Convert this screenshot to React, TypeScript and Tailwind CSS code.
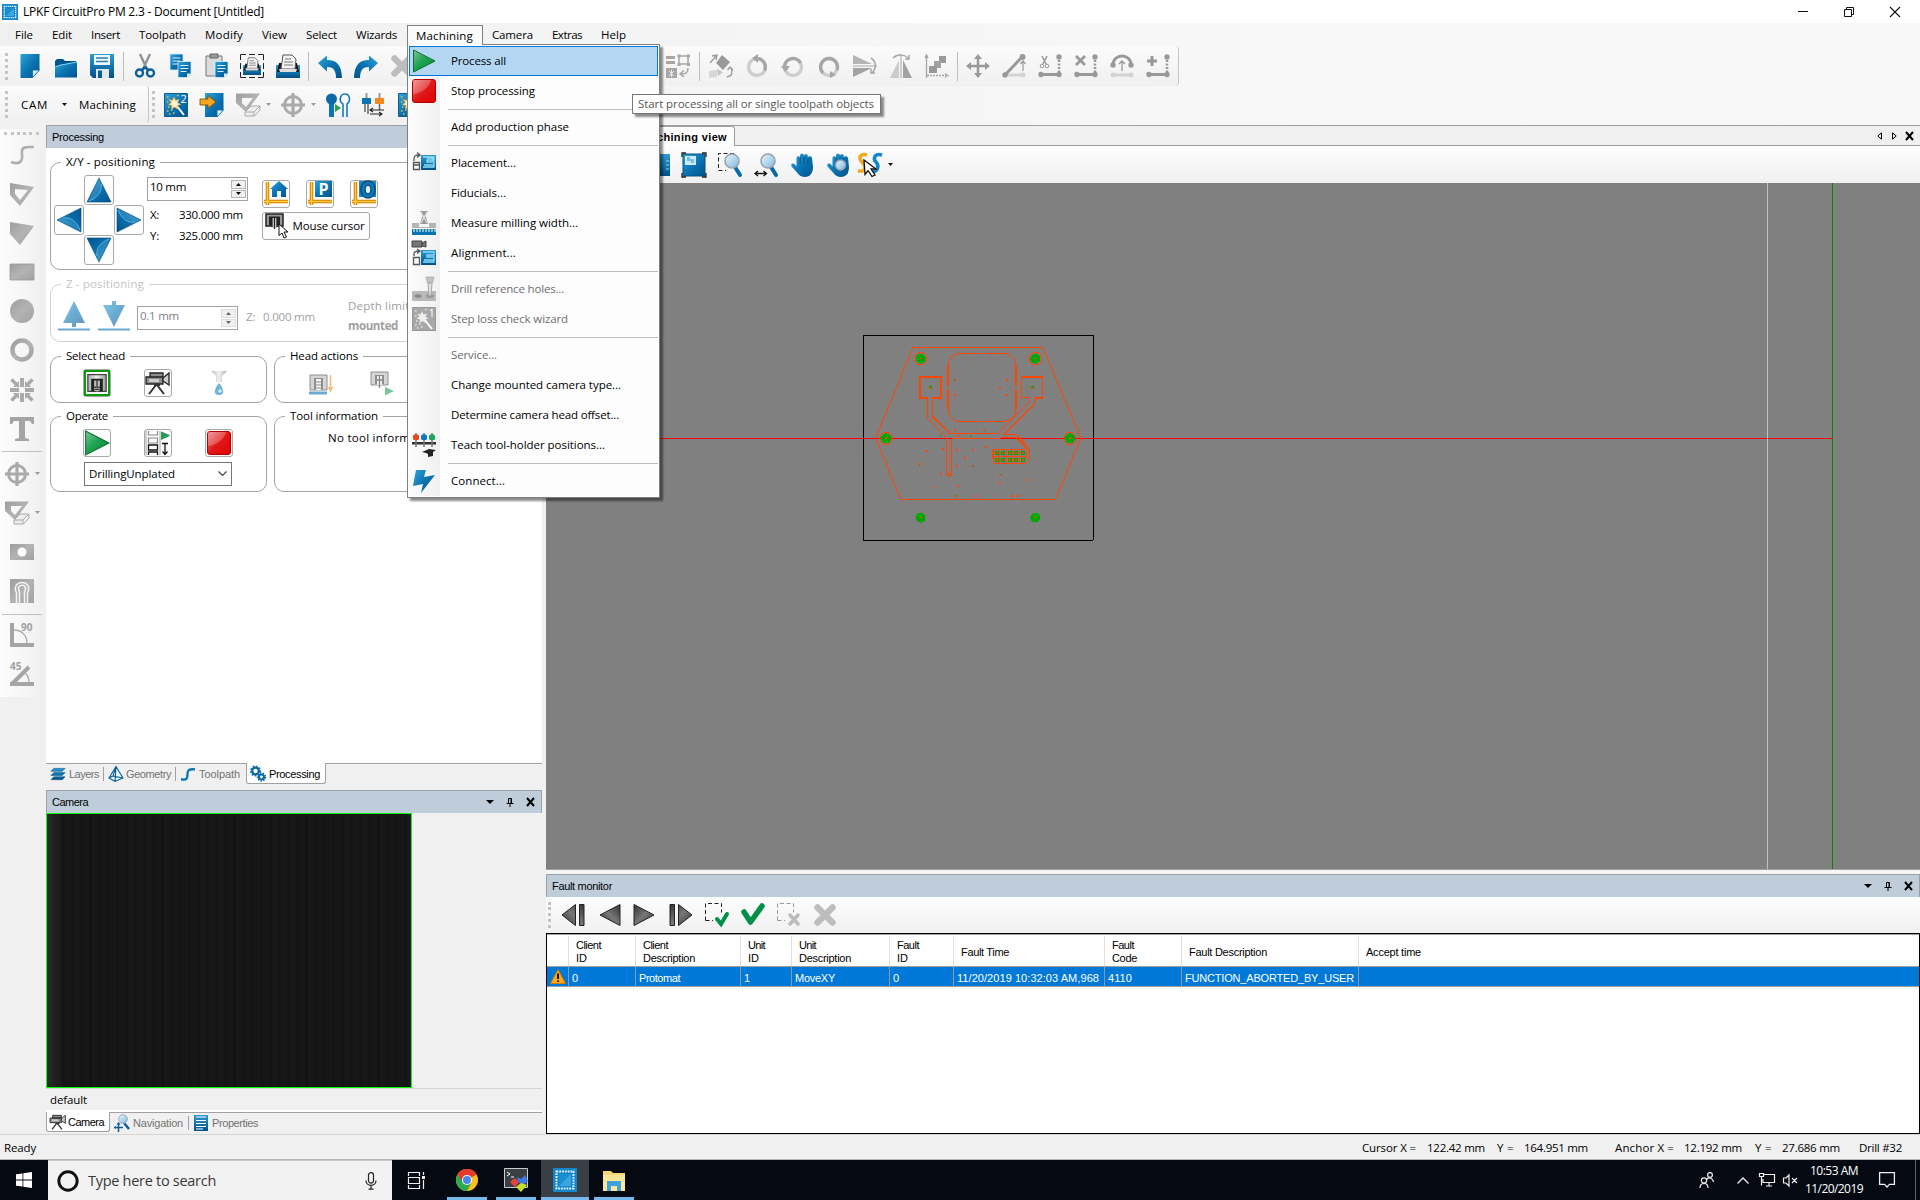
import React, { useLayoutEffect, useRef, useState } from "react";

type Kids = { children?: React.ReactNode };

/* Text whose tracking is adjusted so that it fills the given width */
function Fit({ w, className = "", children }: { w: number; className?: string; children: string }) {
  const ref = useRef<HTMLSpanElement>(null);
  const [ls, setLs] = useState(0);
  useLayoutEffect(() => {
    if (ref.current) setLs((w - ref.current.getBoundingClientRect().width) / children.length);
  }, []);
  return (
    <span className={"shrink-0 overflow-visible whitespace-pre " + className} style={{ width: w }}>
      <span ref={ref} className="inline-block" style={{ letterSpacing: ls }}>{children}</span>
    </span>
  );
}

function I({ w = 24, h = 24, vb = "0 0 24 24", className = "", children }: Kids & { w?: number; h?: number; vb?: string; className?: string }) {
  return (
    <svg width={w} height={h} viewBox={vb} className={"shrink-0 overflow-visible " + className} fill="none">
      {children}
    </svg>
  );
}

const Defs = () => (
  <svg width="0" height="0" className="absolute">
    <defs>
      <linearGradient id="b" x1="0" y1="0" x2="1" y2="1"><stop offset="0" stopColor="#2fa5d8" /><stop offset=".5" stopColor="#0b74b3" /><stop offset="1" stopColor="#00528c" /></linearGradient>
      <linearGradient id="b2" x1="0" y1="0" x2="0" y2="1"><stop offset="0" stopColor="#2d9bd3" /><stop offset="1" stopColor="#00508a" /></linearGradient>
      <linearGradient id="g" x1="0" y1="0" x2="1" y2="1"><stop offset="0" stopColor="#9d9d9d" /><stop offset=".5" stopColor="#b3b3b3" /><stop offset="1" stopColor="#a2a2a2" /></linearGradient>
      <linearGradient id="gn" x1="0" y1="0" x2="1" y2="1"><stop offset="0" stopColor="#7cc795" /><stop offset=".45" stopColor="#1fa351" /><stop offset="1" stopColor="#008a3a" /></linearGradient>
      <linearGradient id="r" x1="0" y1="0" x2="1" y2="1"><stop offset="0" stopColor="#f08080" /><stop offset=".5" stopColor="#e01818" /><stop offset="1" stopColor="#e00000" /></linearGradient>
      <linearGradient id="k" x1="0" y1="0" x2="1" y2="1"><stop offset="0" stopColor="#333" /><stop offset=".5" stopColor="#777" /><stop offset="1" stopColor="#333" /></linearGradient>
      <linearGradient id="lens" x1="0" y1="0" x2="1" y2="1"><stop offset="0" stopColor="#e8f6fd" /><stop offset="1" stopColor="#7fb8e0" /></linearGradient>
      <linearGradient id="m" x1="0" y1="0" x2="1" y2="0"><stop offset="0" stopColor="#aaa" /><stop offset=".5" stopColor="#eee" /><stop offset="1" stopColor="#999" /></linearGradient>
    </defs>
  </svg>
);

/* ---------- file and edit icons ---------- */
const NewIcon = () => <I><path d="M2.500 0h19v16l-7 8h-12z" fill="url(#b)" /><path d="M14.500 23.500v-7.500h7z" fill="#cfeaf8" stroke="#0a6aa6" strokeWidth=".8" /></I>;
const OpenIcon = () => <I><path d="M1 23.500V7l2-2h6l2 2h11v4" fill="#00568f" /><path d="M1 23.500V13l4-2 18-3v15.500z" fill="url(#b)" /><path d="M1 13l6-2 16-3" stroke="#8fd0ee" /></I>;
const SaveIcon = () => <I><path d="M0 0h24v24H3l-3-3z" fill="url(#b2)" /><path d="M4 1h16v10H4z" fill="#eef7fc" /><path d="M6 4h12M6 7.500h12" stroke="#2b7fb2" strokeWidth="1.500" /><path d="M6 15h13v9H6z" fill="#dfe7ec" /><path d="M8 16.500h4v7.500H8z" fill="#0a5f99" /></I>;
const CutIcon = () => <I><path d="M7 0l6.500 14M17 0l-6.500 14" stroke="#8d9499" strokeWidth="2.400" /><path d="M12 13l-3 3M12 13l3 3" stroke="#0a5f99" strokeWidth="2.500" /><circle cx="6.500" cy="19" r="3.500" stroke="#0a5f99" strokeWidth="2.400" /><circle cx="17.500" cy="19" r="3.500" stroke="#0a5f99" strokeWidth="2.400" /></I>;
const Page = ({ x, y }: { x: number; y: number }) => <g transform={`translate(${x} ${y})`}><path d="M0 0h13v12l-4 4H0z" fill="url(#b)" stroke="#d6edf8" strokeWidth=".8" /><path d="M2.500 4h8M2.500 7h8M2.500 10h6" stroke="#d8f0fb" strokeWidth="1.200" /><path d="M9 16v-4h4z" fill="#d6edf8" /></g>;
const CopyIcon = () => <I><Page x={1} y={0} /><Page x={9} y={7.500} /></I>;
const PasteIcon = () => <I><path d="M1 2h16v20H1z" fill="#dcdcdc" stroke="#777" /><path d="M5 0h8v4H5z" fill="#999" stroke="#666" /><Page x={10} y={7.500} /></I>;
const Printer = ({ s = 1, x = 0, y = 0 }: { s?: number; x?: number; y?: number }) => (
  <g transform={`translate(${x} ${y}) scale(${s})`}>
    <path d="M0 11h24v13H0z" fill="url(#b2)" /><path d="M3 9h18l2 9H1z" fill="#1a1a1a" /><path d="M5 15L7 1h9l4 4-1 10z" fill="#f4f4f4" stroke="#555" /><path d="M9 5h6M8 8h9M8 11h9" stroke="#777" strokeWidth="1.100" /><path d="M3 15h18l-1 3H4z" fill="#ddd" />
  </g>
);
const PrintAreaIcon = () => <I><path d="M.5 6V.5H6M18 .5h5.500V6M23.500 18v5.500H18M6 23.500H.5V18M9 .5h6M9 23.500h6M.5 9v6M23.500 9v6" stroke="#222" /><Printer s={0.75} x={3} y={3} /></I>;
const PrintIcon = () => <I><Printer /></I>;
const UndoIcon = ({ flip = false }: { flip?: boolean }) => <I className={flip ? "-scale-x-100" : ""}><path d="M0 9l9-7.500v4.500c9 0 14.500 4 15 18h-6c0-8-3-11-9-11v4.500z" fill="url(#b)" /></I>;
const XIcon = () => <I><path d="M4.500 4.500l15 15M19.500 4.500l-15 15" stroke="#bdbdbd" strokeWidth="6.500" strokeLinecap="round" /></I>;

/* ---------- greyed transform icons ---------- */
const G = "#a6a6a6";
const ArrangeIcon = () => <I><path d="M0 3.500h9M0 8.500h9" stroke={G} strokeWidth="3" /><path d="M13 2h9v8h-9z" stroke={G} strokeWidth="1.500" /><path d="M11.500 .5h3v3h-3zM21 .5h3v3h-3zM11.500 9h3v3h-3zM21 9h3v3h-3z" fill={G} /><path d="M0 14h11v10H0z" fill={G} /><path d="M3 17l5 5M8 17l-5 5M5.500 16v7" stroke="#eee" /><path d="M22 14c0 5-2 6-7 6M18 16.500l-4 3.500 4 3" stroke={G} strokeWidth="1.500" /></I>;
const TransformIcon = () => <I><path d="M13 1l8 7-7 8-7-7z" fill="#999" /><path d="M0 17l8-1v7l-8 1z" fill="#d8d8d8" /><path d="M8 15l6 3-5 4z" fill="#c4c4c4" /><path d="M1 9l6-7M3 2l5-1-1 5M18 23c5-1 6-4 4-9M18.500 16l2.500-3 3 3" stroke="#999" strokeWidth="1.300" /></I>;
const RotIcon = ({ k }: { k: number }) => (
  <I>
    <circle cx="12" cy="13" r="8.500" stroke="#cdcdcd" strokeWidth="3.300" />
    {k === 0 && <><path d="M12 4.500a8.500 8.500 0 0 1 7.500 12" stroke={G} strokeWidth="3.300" /><path d="M13 0v9L7 4z" fill={G} /></>}
    {k === 1 && <><path d="M3.500 13a8.500 8.500 0 0 1 16-4" stroke={G} strokeWidth="3.300" /><path d="M0 12h9l-4.500 6z" fill={G} /></>}
    {k === 2 && <><path d="M6 19A8.500 8.500 0 1 1 20 16" stroke={G} strokeWidth="3.300" /><path d="M13 17v7l6-3z" fill={G} /></>}
  </I>
);
const FlipV = () => <I><path d="M0 1l19 9H0z" fill="#b4b4b4" /><path d="M0 23l19-9H0z" fill="#a2a2a2" /><path d="M0 12h24" stroke={G} /><path d="M18 4c5 3 6 10 1 15M22 19h-4v-4" stroke={G} strokeWidth="1.500" /></I>;
const FlipH = () => <I><path d="M1 24L10 6v18z" fill="#ccc" /><path d="M23 24L14 6v18z" fill="#a2a2a2" /><path d="M12 0v24" stroke={G} /><path d="M4 4c4-4 12-4 16 1M20 1v4h-4" stroke={G} strokeWidth="1.500" /></I>;
const ScaleIcon = () => <I><path d="M14 2h7v7h-7z" fill="#999" /><path d="M9 7h7v7H9z" fill="#a2a2a2" /><path d="M4 12h8v7H4z" fill="#999" /><path d="M1.500 24V2M0 4l1.500-3L3 4" stroke={G} strokeWidth="1.300" /><path d="M2 21.500h20M20 19.500l3 2-3 2" stroke={G} strokeWidth="1.300" strokeDasharray="2 1" /></I>;
const MoveIcon = () => <I><path d="M12 3v18M3 12h18" stroke="#999" strokeWidth="2.500" /><path d="M12 0l4 5H8zM12 24l4-5H8zM0 12l5-4v8zM24 12l-5-4v8z" fill="#999" /></I>;
const NodeLine = ({ k }: { k: number }) => (
  <I>
    {k === 0 && <><path d="M3 21h18" stroke="#d3d3d3" strokeWidth="3" /><path d="M3 21L20 3" stroke="#999" strokeWidth="3" /><circle cx="3" cy="21" r="2.700" fill="#999" /><circle cx="20.500" cy="3" r="3" fill="#999" /><circle cx="21" cy="21" r="2.500" fill="#d3d3d3" /><path d="M21 17V8M18.500 10L21 7l2.500 3" stroke="#999" strokeWidth="1.200" /></>}
    {k !== 0 && k !== 3 && <><path d="M3 20.500h18" stroke="#999" strokeWidth="3" /><circle cx="3" cy="20.500" r="2.700" fill="#999" /><circle cx="21" cy="20.500" r="2.700" fill="#999" /><circle cx="21" cy="3" r="2.700" fill="#999" /><path d="M21 6v12" stroke="#999" strokeWidth="2.500" strokeDasharray="2 1.500" /></>}
    {k === 1 && <><path d="M4 2l4 8M9 2L5 10" stroke="#999" strokeWidth="1.500" /><circle cx="4" cy="12" r="1.800" stroke="#999" /><circle cx="9" cy="12" r="1.800" stroke="#999" /></>}
    {k === 2 && <path d="M2 2l9 9M11 2l-9 9" stroke="#999" strokeWidth="2.800" />}
    {k === 4 && <path d="M6 2v10M1 7h10" stroke="#999" strokeWidth="3" />}
    {k === 3 && <><path d="M3 21h18" stroke="#d3d3d3" strokeWidth="3" /><circle cx="3" cy="21" r="2.500" fill="#d3d3d3" /><circle cx="21" cy="21" r="2.500" fill="#d3d3d3" /><path d="M3 11C3-1 21-1 21 11" stroke="#999" strokeWidth="3" /><circle cx="3" cy="11" r="2.700" fill="#999" /><circle cx="21" cy="11" r="2.700" fill="#999" /><path d="M12 17V7M9 10l3-3 3 3" stroke="#999" strokeWidth="1.300" /></>}
  </I>
);

/* ---------- CAM icons ---------- */
const WandIcon = ({ n, grey = false }: { n?: string; grey?: boolean }) => (
  <I>
    <path d="M.5 .5h23v23H.5z" fill={grey ? "#a8a8a8" : "url(#b)"} stroke={grey ? "#999" : "#0b5e95"} />
    <path d="M12 12l8 10" stroke="#fff" strokeWidth="2" />
    <path d="M10 4l1.500 3.500L15 6.500 13.500 9.500l3 2-3.500 1 .5 3.500-3-2-3 2 .5-3.500-3.500-1 3-2L5 6.500l3.500 1z" fill={grey ? "#eee" : "#fff3d0"} stroke={grey ? "none" : "#e7ac3d"} strokeWidth=".8" />
    <path d="M3 4h1.500M3 9h1.500M4 14h1.500M3 18h1.500M7 17h1.500M9 20h1.500M5 21h1.500M13 2.500h1.500" stroke={grey ? "#e4e4e4" : "#f6c24a"} strokeWidth="1.600" />
    {n && <text x="16.500" y="10" fontSize="11" fill="#fff" fontFamily="Open Sans, sans-serif">{n}</text>}
  </I>
);
const ImportIcon = () => <I><path d="M5 0h18.500v17l-6.500 7H5z" fill="url(#b)" /><path d="M17 24v-7h6.500z" fill="#d6edf8" stroke="#0a6aa6" strokeWidth=".8" /><path d="M0 6h8V2.500l8 6.500-8 6.500V12H0z" fill="#f6a51c" stroke="#6b4a10" strokeWidth=".8" /></I>;
const SquareIcon = () => <I><path fillRule="evenodd" d="M0 .5h24L10 19 0 10zM6 5v5l4 4 7-9z" fill="url(#g)" /><path d="M9 19l6-6h9l-6 6v4H9z" fill="#ededed" stroke="#aaa" /><path d="M9 19h9l6-6v4l-6 6.500" stroke="#aaa" /></I>;
const TargetIcon = () => <I><circle cx="12" cy="12" r="8.500" stroke="#aaa" strokeWidth="3" /><path d="M12 0v24M0 12h24" stroke="#aaa" strokeWidth="3.200" /></I>;
const ContourIcon = () => <I><path d="M3 24V11h5v13z" fill="#0b74b3" /><circle cx="5.500" cy="6" r="5.500" fill="#0b6aa5" /><path d="M17 24V11c-6-4-1-11 2-10 5 0 6 7 2 10v13" stroke="#0b74b3" strokeWidth="1.500" /><path d="M9 11v8l6-4z" fill="#22a04a" /></I>;
const ToolChangeIcon = () => <I><path d="M4.500 0v6M17.500 0v6" stroke="#999" strokeWidth="2" /><path d="M0 5h9v6H0z" fill="#0b74b3" /><path d="M13 5h9v6h-9z" fill="#f08a1c" /><path d="M3 11v8M6 11v10M17.500 11v6" stroke="#666" strokeWidth="1.500" /><path d="M8 17h14M11 15l-3 2 3 2M8 21h12M17 19l3 2-3 2" stroke="#222" strokeWidth="1.100" /></I>;

/* ---------- drawing tools ---------- */
const sideIcons: React.ReactNode[] = [
  <path d="M1 19c8 3 12 0 11-8S16 4 24 4" stroke="url(#g)" strokeWidth="2.600" />,
  <path fillRule="evenodd" d="M0 1l24 4-14 19L0 13zM5 7v5l5 6 8-10z" fill="url(#g)" />,
  <path d="M0 1l24 4-14 19L0 13z" fill="url(#g)" />,
  <path d="M0 4h24v16H0z" fill="url(#g)" stroke="#999" strokeWidth=".8" />,
  <circle cx="12" cy="12" r="12" fill="url(#g)" />,
  <circle cx="12" cy="12" r="9.500" stroke="url(#g)" strokeWidth="4.500" />,
  <><path d="M10 0h4v9h-4zM10 15h4v9h-4zM0 10h9v4H0zM15 10h9v4h-9z" fill="#aaa" /><path d="M1.500 1.500l6 6M22.500 1.500l-6 6M1.500 22.500l6-6M22.500 22.500l-6-6" stroke="#aaa" strokeWidth="3.500" /><path d="M9 3v6H3zM15 3v6h6zM9 21v-6H3zM15 21v-6h6z" fill="#aaa" /></>,
  <path d="M0 0h24v7h-2l-2-3h-5v17l4 1v2H5v-2l4-1V4H4L2 7H0z" fill="#a5a5a5" />,
];
const sideLow: React.ReactNode[] = [
  <><path d="M0 4h24v16H0z" fill="url(#g)" /><circle cx="12" cy="12" r="4.500" fill="#fff" /></>,
  <><path d="M0 0h24v24H0z" fill="url(#g)" /><path d="M9.500 24V13c-5-9 10-9 5 0v11M6.500 24V14C0 0 24 0 17.500 14v10" stroke="#f4f4f4" strokeWidth="1.500" /></>,
];

function Side() {
  return (
    <div className="flex w-[46px] shrink-0 flex-col bg-[#f0f0f0]">
      <div className="mt-1 flex h-[568px] flex-col rounded-r bg-gradient-to-r from-[#fdfdfd] to-[#efefef]">
        <div className="ml-1 mt-[3px] h-0 w-[35px] border-t-[3px] border-dotted border-[#c4c4c4]" />
        <div className="ml-[10px] mt-2 flex flex-col gap-[15.100px]">
          {sideIcons.map((c, i) => <I key={i}>{c}</I>)}
        </div>
        <div className="ml-[2px] mt-[10px] h-px w-10 bg-[#c0c0c0]" />
        <div className="mt-[10px] flex items-center gap-[6px] pl-[5px]"><TargetIcon /><Caret grey /></div>
        <div className="mt-[15px] flex items-center gap-[6px] pl-[5px]"><SquareIcon /><Caret grey /></div>
        <div className="ml-[10px] mt-[15px] flex flex-col gap-[15px]">{sideLow.map((c, i) => <I key={i}>{c}</I>)}</div>
        <div className="ml-[2px] mt-[11px] h-px w-10 bg-[#c0c0c0]" />
        <div className="ml-[10px] mt-2 flex flex-col gap-[15px]">
          <I><path d="M2 0v22h22" stroke="#a5a5a5" strokeWidth="4" /><path d="M4 7c8 0 13 6 13 13" stroke="#aaa" strokeWidth="1.300" /><text x="11" y="7.500" fontSize="10" fontWeight="700" fill="#a0a0a0" fontFamily="Open Sans, sans-serif">90</text></I>
          <I><path d="M0 22h24M2 22L19 5" stroke="#a5a5a5" strokeWidth="4" /><path d="M13 9c4 3 6 7 6 11" stroke="#aaa" strokeWidth="1.300" /><text x="0" y="7.500" fontSize="10" fontWeight="700" fill="#a0a0a0" fontFamily="Open Sans, sans-serif">45</text></I>
        </div>
      </div>
    </div>
  );
}

const Caret = ({ grey = false }: { grey?: boolean }) => <I w={5} h={3} vb="0 0 5 3"><path d="M0 0h5L2.500 3z" fill={grey ? "#999" : "#111"} /></I>;
const Grip = ({ tall = 27 }: { tall?: number }) => <div className="w-0 shrink-0 border-l-[3px] border-dotted border-[#c4c4c4]" style={{ height: tall }} />;
const Cell = ({ children }: Kids) => <div className="flex w-9 shrink-0 justify-center">{children}</div>;
const Sep = ({ className = "" }: { className?: string }) => <div className={"h-[29px] w-px shrink-0 bg-[#bdbdbd] " + className} />;

/* ---------- menu bar ---------- */
const menus: [string, number, number][] = [
  ["File", 15, 18], ["Edit", 19, 20], ["Insert", 19, 29], ["Toolpath", 19, 47], ["Modify", 19, 38], ["View", 19, 25], ["Select", 19, 31],
  ["Wizards", 19, 41], ["Machining", 19, 57], ["Camera", 19, 41], ["Extras", 19, 30], ["Help", 19, 25],
];

const winBtn = "flex w-[46px] justify-center";

function TitleBar() {
  return (
    <div className="flex h-[23px] items-center bg-white">
      <AppIcon s={16} className="ml-[2px] mr-[5px]" />
      <Fit w={241} className="text-[12px]">LPKF CircuitPro PM 2.3 - Document [Untitled]</Fit>
      <div className="ml-auto mr-[2px] flex items-center">
        <div className={winBtn}><I w={10} h={10} vb="0 0 10 10"><path d="M0 4.500h10" stroke="#111" /></I></div>
        <div className={winBtn}><I w={10} h={10} vb="0 0 10 10"><path d="M.5 2.500h7v7h-7zM2.500 2.500v-2h7v7h-2" stroke="#111" /></I></div>
        <div className={winBtn}><I w={10} h={10} vb="0 0 10 10"><path d="M0 0l10 10M10 0L0 10" stroke="#111" strokeWidth="1.100" /></I></div>
      </div>
    </div>
  );
}

const AppIcon = ({ s, className = "" }: { s: number; className?: string }) => (
  <I w={s} h={s} className={className}>
    <path d="M0 0h24v24H0z" fill="#1286c8" /><path d="M3.500 3.500h17v17h-17z" stroke="#e6f5fd" strokeWidth="2" strokeDasharray="1.800 1" /><path d="M6 6h12v12H6z" fill="#1a8fd0" /><path d="M6 18L18 6v12z" fill="#3aa7e0" />
  </I>
);

function Toolbars() {
  return (
    <div className="h-[79px] bg-gradient-to-r from-[#f0f0f0] to-[#f8f8f8] to-70%">
      <div className="flex h-10 w-[1179px] items-center rounded-r border-r border-[#c6c6c6] bg-gradient-to-b from-[#fbfbfb] to-[#f0f0f0]">
        <div className="ml-[5px] mr-1 flex"><Grip /></div>
        <Cell><NewIcon /></Cell><Cell><OpenIcon /></Cell><Cell><SaveIcon /></Cell>
        <Sep className="ml-[3px] mr-[3px]" />
        <Cell><CutIcon /></Cell><Cell><CopyIcon /></Cell><Cell><PasteIcon /></Cell>
        <div className="-ml-px flex"><Cell><PrintAreaIcon /></Cell><Cell><PrintIcon /></Cell></div>
        <Sep className="ml-[2px] mr-[3px]" />
        <Cell><UndoIcon /></Cell><Cell><UndoIcon flip /></Cell><Cell><XIcon /></Cell>
        <div className="w-[240px] shrink-0" />
        <Cell><ArrangeIcon /></Cell>
        <Sep className="ml-[3px] mr-[3px]" />
        <Cell><TransformIcon /></Cell><Cell><RotIcon k={0} /></Cell><Cell><RotIcon k={1} /></Cell><Cell><RotIcon k={2} /></Cell><Cell><FlipV /></Cell><Cell><FlipH /></Cell><Cell><ScaleIcon /></Cell>
        <Sep className="ml-[2px] mr-[2px]" />
        <Cell><MoveIcon /></Cell>
        {[0, 1, 2, 3, 4].map((k) => <Cell key={k}><NodeLine k={k} /></Cell>)}
      </div>
      <div className="flex h-[37px]">
        <div className="flex w-[149px] items-center rounded-r border-r border-[#c6c6c6] bg-gradient-to-b from-[#fbfbfb] to-[#f0f0f0]">
          <div className="ml-[5px] mr-[13px] flex"><Grip /></div>
          <Fit w={27} className="mr-[14px]">CAM</Fit><Caret /><Fit w={57} className="ml-[12px]">Machining</Fit>
        </div>
        <div className="flex w-[500px] items-center bg-gradient-to-b from-[#fbfbfb] to-[#f0f0f0]">
          <div className="ml-[3px] mr-[3px] flex"><Grip /></div>
          <Cell><WandIcon n="2" /></Cell><Cell><ImportIcon /></Cell><Cell><SquareIcon /></Cell>
          <div className="flex w-[9px]"><Caret grey /></div>
          <Cell><TargetIcon /></Cell>
          <div className="flex w-[9px]"><Caret grey /></div>
          <Cell><ContourIcon /></Cell><Cell><ToolChangeIcon /></Cell><Cell><WandIcon /></Cell>
        </div>
      </div>
    </div>
  );
}

/* ---------- machining menu ---------- */
const BoardIcon = () => <I><path d="M9 4h15v15H9z" fill="url(#b2)" /><path d="M11 6h11v3h-7v2h7v5H11M15 7h6v3M12 14h10" stroke="#8fdcf8" strokeWidth="1.300" /><path d="M2 10V8c0-3 1-4 5-4M5 1.500L8 4 5 6.500M1.500 11.500h6v7h-6zM1.500 14h6" stroke="#555" strokeWidth="1.300" /></I>;
const MillIcon = () => <I><path d="M8 0h8l-2.500 5L16 13H8l2.500-8z" fill="#9a9a9a" /><path d="M9 1l6 11M15 1L9 12" stroke="#eee" /><path d="M0 12h7v4h10v-4h7v5H0z" fill="#b5b5b5" /><path d="M0 18h24v6H0z" fill="#0b74b3" /><path d="M2 18v3M5 18v3M8 18v3M11 18v3M14 18v3M17 18v3M20 18v3M23 18v3" stroke="#fff" /></I>;
const AlignIcon = () => <I><path d="M0 0h10v6H0zM10 2l4-2v6l-4-1z" fill="#777" stroke="#444" /><path d="M9 9h15v15H9z" fill="url(#b2)" /><path d="M11 11h11v3h-7v2h7v5H11M12 19h10" stroke="#8fdcf8" strokeWidth="1.300" /><path d="M2 15v-2c0-2 1-3 5-3M5 8l3 2-3 2.500M1.500 16.500h6v7h-6z" stroke="#555" strokeWidth="1.300" /></I>;
const DrillIcon = () => <I><path d="M0 14h24v10H0z" fill="#b9b9b9" /><ellipse cx="6" cy="19" rx="3.500" ry="1.800" fill="#888" /><ellipse cx="18" cy="19" rx="4" ry="2" fill="#999" /><path d="M14 0h8l-1.500 6h-5z" fill="#c4c4c4" stroke="#aaa" strokeWidth=".8" /><path d="M16 6h4l-1 13h-2z" fill="#e2e2e2" stroke="#999" strokeWidth=".8" /></I>;
const TeachIcon = () => <I><path d="M0 9h24v2.500H0z" fill="#333" /><path d="M4 0v14M12 0v14M20 0v14" stroke="#777" strokeWidth="1.600" /><rect x="1" y="1.500" width="6" height="5.500" rx="1.500" fill="#e8481e" /><rect x="9" y="1.500" width="6" height="5.500" rx="1.500" fill="#0b78c0" /><rect x="17" y="1.500" width="6" height="5.500" rx="1.500" fill="#1fa362" /><path d="M10 19l7-3 7 1-3 2v4l-5 1v-3l-2-1z" fill="#222" /></I>;
const BoltIcon = () => <I><path d="M4 1h10l-2 7 11-2L9 24l2-9-10 2z" fill="url(#b)" /></I>;
const PlayIcon = ({ s = 24 }: { s?: number }) => <I w={s} h={s}><path d="M1.500 1l21.500 11L1.500 23z" fill="url(#gn)" stroke="#0c6f30" /></I>;
const StopIcon = () => <I><rect x=".5" y=".5" width="23" height="23" rx="2.500" fill="url(#r)" stroke="#b30000" /><path d="M1 1h18C17 9 9 14 1 15z" fill="#fff" opacity=".22" /></I>;

type Row = { t: string; w: number; icon?: React.ReactNode; off?: boolean; hot?: boolean } | null;
const rows: Row[] = [
  { t: "Process all", w: 55, icon: <PlayIcon />, hot: true },
  { t: "Stop processing", w: 84, icon: <StopIcon /> },
  null,
  { t: "Add production phase", w: 118 },
  null,
  { t: "Placement...", w: 65, icon: <BoardIcon /> },
  { t: "Fiducials...", w: 55 },
  { t: "Measure milling width...", w: 127, icon: <MillIcon /> },
  { t: "Alignment...", w: 65, icon: <AlignIcon /> },
  null,
  { t: "Drill reference holes...", w: 113, icon: <DrillIcon />, off: true },
  { t: "Step loss check wizard", w: 117, icon: <WandIcon n="1" grey />, off: true },
  null,
  { t: "Service...", w: 46, off: true },
  { t: "Change mounted camera type...", w: 170 },
  { t: "Determine camera head offset...", w: 168 },
  { t: "Teach tool-holder positions...", w: 154, icon: <TeachIcon /> },
  null,
  { t: "Connect...", w: 54, icon: <BoltIcon /> },
];

function MachiningMenu() {
  return (
    <>
      <div className="absolute left-[407px] top-[44px] z-20 w-[253px] border border-[#808080] bg-[#fdfdfd] p-px shadow-[3px_3px_2px_rgba(0,0,0,0.45)]">
        <div className="bg-gradient-to-r from-[#fcfcfc] to-[#f0f0f0] bg-[length:31px_100%] bg-no-repeat">
          {rows.map((r, i) =>
            r ? (
              <div key={i} className={"flex h-[30px] items-center border pl-[2px] " + (r.hot ? "border-[#0078d7] bg-[#b3d7f3]" : "border-transparent")}>
                <div className="w-[39px] shrink-0">{r.icon}</div>
                <Fit w={r.w} className={r.off ? "text-[#6d6d6d]" : ""}>{r.t}</Fit>
              </div>
            ) : (
              <div key={i} className="flex h-[6px] items-center pl-[39px]"><div className="h-px w-full bg-[#bdbdbd]" /></div>
            )
          )}
        </div>
      </div>
      <div className="absolute left-[407px] top-[25px] z-20 flex h-5 w-[76px] items-center border border-b-0 border-[#808080] bg-[#fbfbfb] pl-[8px]">
        <Fit w={57}>Machining</Fit>
      </div>
      <div className="absolute left-[632px] top-[94px] z-30 flex h-5 w-[249px] items-center border border-[#767676] bg-white pl-[5px] text-[#575757] shadow-[3px_3px_2px_rgba(0,0,0,0.45)]">
        <Fit w={236}>Start processing all or single toolpath objects</Fit>
      </div>
    </>
  );
}

/* ---------- processing panel ---------- */
function Box({ t, w, dim = false, className, children }: Kids & { t: string; w: number; dim?: boolean; className: string }) {
  return (
    <fieldset className={"shrink-0 rounded-[10px] border bg-white " + (dim ? "border-[#d0d0d0] " : "border-[#a3a3a3] ") + className}>
      <legend className={"ml-[10px] flex h-4 items-center px-[5px] " + (dim ? "text-[#c3c3c3]" : "")}><Fit w={w}>{t}</Fit></legend>
      {children}
    </fieldset>
  );
}

const Btn = ({ children, className = "" }: Kids & { className?: string }) => (
  <div className={"flex shrink-0 items-center justify-center rounded-[3px] border border-[#a9a9a9] bg-[#fdfdfd] " + className}>{children}</div>
);

const DirIcon = ({ r }: { r: string }) => <I className={r}><path d="M12 0l12 24H0z" fill="url(#b)" stroke="#00487c" strokeWidth=".6" /><path d="M1.500 23C10 20 14 12 14 6L12 1z" fill="#fff" opacity=".12" /><path d="M2 23C12 19 15 12 14 6" stroke="#7cc4ea" strokeWidth=".8" /></I>;

const Axis = ({ children }: Kids) => <I w={26} h={26} vb="0 0 26 26">{children}<path d="M4.500 1v23M1 20.500h24" stroke="#d77a00" strokeWidth="3.500" /><path d="M4.500 1v23M1 20.500h24" stroke="#ffd23a" strokeWidth="1.500" /></I>;

const Spin = ({ v, w, dim = false }: { v: string; w: number; dim?: boolean }) => (
  <div className={"flex h-6 w-[101px] justify-between border border-[#a0a0a8] p-[1px] " + (dim ? "text-[#808080]" : "")}>
    <Fit w={w} className="pl-[1px]">{v}</Fit>
    <div className="flex w-[15px] flex-col gap-px py-[1px]">
      {[0, 1].map((k) => (
        <div key={k} className={"flex flex-1 items-center justify-center border bg-[#f0f0f0] " + (dim ? "border-[#ddd]" : "border-[#b4b4b4]")}>
          <I w={5} h={3} vb="0 0 5 3" className={k ? "" : "rotate-180"}><path d="M0 0h5L2.500 3z" fill={dim ? "#666" : "#000"} /></I>
        </div>
      ))}
    </div>
  </div>
);

const HeadIcon = ({ s = 24 }: { s?: number }) => <I w={s} h={s}><path d="M1 2h22v20H1z" fill="url(#m)" stroke="#444" strokeWidth="1.500" /><path d="M5 7h14v15h-4v-3H9v3H5z" fill="#222" /><path d="M8.500 9h7v9l-2 4h-3l-2-4z" fill="#bbb" /><path d="M12 8v8M8.500 17h7M9.500 19.500h5" stroke="#333" strokeWidth="1.500" /></I>;
const CamIcon = ({ s = 24 }: { s?: number }) => <I w={s} h={s}><path d="M4 2h13v4H4zM0 6h17v7H0z" fill="#8d8d8d" stroke="#222" strokeWidth="1.300" /><path d="M3 8h10v3H3z" fill="#ccc" /><path d="M17 7l6-5v12l-6-4z" fill="#ccc" stroke="#222" strokeWidth="1.300" /><path d="M10 14L3 23M11 14l7 9M8 14h6" stroke="#333" strokeWidth="2" /></I>;
const DropIcon = () => <I><path d="M4 0h16l-5 5v6H9V5z" fill="url(#m)" opacity=".8" /><path d="M12 12c7 9 4 12 0 12s-7-3 0-12z" fill="#6fb3da" /><circle cx="13" cy="20" r="1.800" fill="#d5ecf8" /></I>;
const StepIcon = () => <I><path d="M0 0v24M14 0v24" stroke="#888" strokeWidth=".8" /><path d="M2.500 0v4h9V0M2.500 7h9v5h-9z" stroke="#888" strokeWidth="1.200" /><path d="M2.500 14h9v5h-9zM2.500 24v-3h9v3" stroke="#111" strokeWidth="1.300" /><path d="M15.500 1l8 3.500-8 4z" fill="#1fa351" stroke="#0c6f30" strokeWidth=".6" /><path d="M16 12.500h6M19 12.500V23M16.500 20.500L19 23.500l2.500-3" stroke="#111" strokeWidth="1.300" /></I>;

function Processing() {
  return (
    <div className="flex h-[616px] flex-col border-b border-[#a0a0a0] bg-white pl-1 pt-[6px]">
      <Box t="X/Y - positioning" w={89} className="h-[116px] w-[488px]">
        <div className="flex pl-[3px] pt-[5px]">
          <div className="grid w-[90px] grid-cols-3">
            <div /><Btn className="size-[30px]"><DirIcon r="" /></Btn><div />
            <Btn className="size-[30px]"><DirIcon r="-rotate-90" /></Btn><div /><Btn className="size-[30px]"><DirIcon r="rotate-90" /></Btn>
            <div /><Btn className="size-[30px]"><DirIcon r="rotate-180" /></Btn><div />
          </div>
          <div className="ml-[3px] w-[101px] pt-[2px]">
            <Spin v="10 mm" w={36} />
            <div className="mt-[3px] flex h-[21px] items-center justify-between pl-[3px] pr-[5px]"><Fit w={9}>X:</Fit><Fit w={64}>330.000 mm</Fit></div>
            <div className="flex h-[21px] items-center justify-between pl-[3px] pr-[5px]"><Fit w={9}>Y:</Fit><Fit w={64}>325.000 mm</Fit></div>
          </div>
          <div className="ml-[14px] pt-[5px]">
            <div className="flex gap-4">
              <Btn className="size-7"><Axis><path d="M16 0l9 8h-2v8H9V8H7z" fill="url(#b)" /><path d="M14 10h4v6h-4z" fill="#e8f5fc" /></Axis></Btn>
              <Btn className="size-7"><Axis><path d="M8 0h17v16H8z" fill="url(#b)" /><text x="11.500" y="13.500" fontSize="16" fontWeight="700" fill="#fff" fontFamily="Open Sans, sans-serif">P</text></Axis></Btn>
              <Btn className="size-7"><Axis><path d="M8 0h17v16H8z" fill="#1b86c4" /><ellipse cx="17" cy="8.500" rx="5" ry="6.500" fill="#dff1fb" stroke="#023a68" strokeWidth="5.500" /><ellipse cx="17" cy="8.500" rx="5" ry="6.500" stroke="#0b74b3" strokeWidth="3.500" /></Axis></Btn>
            </div>
            <Btn className="mt-[4px] h-7 w-[108px] pr-[3px]">
              <I w={26} h={26} vb="0 0 26 26"><path d="M1 1h17v12H1z" fill="#999" stroke="#222" strokeWidth="1.500" /><path d="M4 3.500h11v9H4z" fill="#222" /><path d="M7 5h5v10H7z" fill="#ccc" /><path d="M7 4v10M9.500 5v11M12 4v10" stroke="#222" strokeWidth="1.200" /><path d="M14 11l9 8h-4l2.500 5-2.500 1-2-5-3 2.500z" fill="#fff" stroke="#111" /></I>
              <Fit w={72} className="ml-[2px]">Mouse cursor</Fit>
            </Btn>
          </div>
        </div>
      </Box>
      <Box t="Z - positioning" w={78} dim className="mt-[6px] h-[66px] w-[488px]">
        <div className="flex pl-[7px] pt-[9px] text-[#a0a0a0]">
          <I w={32} h={32} vb="0 0 32 32" className="opacity-60"><path d="M16 0l11 22h-9v4h-4v-4H5z" fill="url(#b)" /><path d="M0 28.500h32" stroke="#0b74b3" strokeWidth="2" /></I>
          <I w={32} h={32} vb="0 0 32 32" className="ml-2 opacity-60"><path d="M14 0h4v4h9L16 26 5 4h9z" fill="url(#b)" /><path d="M0 28.500h32" stroke="#0b74b3" strokeWidth="2" /></I>
          <div className="ml-[7px] mt-[5px]"><Spin v="0.1 mm" w={39} dim /></div>
          <Fit w={9} className="ml-[8px] mt-[8px]">Z:</Fit>
          <Fit w={52} className="ml-[8px] mt-[8px]">0.000 mm</Fit>
          <div className="ml-[33px] mt-[-3px] flex flex-col gap-[4px]">
            <Fit w={73}>Depth limiter</Fit>
            <Fit w={50} className="font-bold">mounted</Fit>
          </div>
        </div>
      </Box>
      <div className="mt-[6px] flex gap-[7px]">
        <Box t="Select head" w={59} className="h-[55px] w-[217px]">
          <div className="flex gap-[33px] pl-8 pt-[5px]">
            <Btn className="size-7"><div className="flex size-[26px] items-center justify-center border-2 border-[#0a9a0a]"><HeadIcon s={20} /></div></Btn>
            <Btn className="size-7"><CamIcon /></Btn>
            <div className="flex size-7 items-center justify-center"><DropIcon /></div>
          </div>
        </Box>
        <Box t="Head actions" w={68} className="h-[55px] w-[264px]">
          <div className="flex gap-[37px] pl-[34px] pt-[7px] opacity-60">
            <I><path d="M1 4h17v15H1z" fill="#bbb" stroke="#444" /><path d="M5 7h9v12H5z" fill="#444" /><path d="M7 8h5v11H7z" fill="#eee" /><path d="M7 11h5M7 14h5M7 17h5" stroke="#444" /><path d="M0 22h18" stroke="#0b74b3" strokeWidth="3" /><path d="M21.500 4v14M19.500 16l2 4 2-4" stroke="#f08a1c" strokeWidth="1.500" /></I>
            <I><path d="M1 1h17v13H1z" fill="#bbb" stroke="#444" /><path d="M5 4h9v9H5z" fill="#444" /><path d="M7 5h5v9H7z" fill="#eee" /><path d="M9.500 5v12M7 9h5" stroke="#333" strokeWidth="1.300" /><path d="M15 16l9 4-9 4.500z" fill="#1fa351" /></I>
          </div>
        </Box>
      </div>
      <div className="mt-[5px] flex gap-[7px]">
        <Box t="Operate" w={42} className="h-[84px] w-[217px]">
          <div className="flex gap-[33px] pl-8 pt-[5px]">
            <Btn className="size-7"><PlayIcon s={26} /></Btn>
            <Btn className="size-7"><StepIcon /></Btn>
            <Btn className="size-7"><StopIcon /></Btn>
          </div>
          <div className="ml-[33px] mt-[5px] flex h-6 w-[148px] items-center justify-between border border-[#767676] pl-[4px] pr-1">
            <Fit w={86}>DrillingUnplated</Fit>
            <I w={9} h={6} vb="0 0 9 6"><path d="M.5 .5l4 4 4-4" stroke="#444" strokeWidth="1.200" /></I>
          </div>
        </Box>
        <Box t="Tool information" w={88} className="h-[84px] w-[264px]">
          <div className="flex pl-[53px] pt-[6px]"><Fit w={111}>No tool information</Fit></div>
        </Box>
      </div>
    </div>
  );
}

const PanelHead = ({ t, w, buttons = true }: { t: string; w: number; buttons?: boolean }) => (
  <div className="flex h-[23px] shrink-0 items-center border border-b-0 border-[#a0a0a0] bg-[#bfcddb] pl-[5px] pr-[6px] font-['Liberation_Sans',sans-serif] text-[11px]">
    <Fit w={w}>{t}</Fit>
    {buttons && (
      <div className="ml-auto flex items-center gap-[12px]">
        <I w={8} h={4} vb="0 0 8 4"><path d="M0 0h8L4 4z" fill="#000" /></I>
        <I w={8} h={9} vb="0 0 8 9"><path d="M2.500 5V.5h3V5M5 .5V5M.5 5.500h7M4 6v3" stroke="#000" /></I>
        <I w={9} h={8} vb="0 0 9 8"><path d="M1 0l7 8M8 0L1 8" stroke="#000" strokeWidth="2" /></I>
      </div>
    )}
  </div>
);

const tabGap = "mx-1 h-[14px] w-px bg-[#a0a0a0]";

function LeftDock() {
  return (
    <div className="flex w-[496px] shrink-0 flex-col">
      <PanelHead t="Processing" w={52} buttons={false} />
      <Processing />
      <div className="flex h-5 items-start font-['Liberation_Sans',sans-serif] text-[11px] text-[#737373]">
        <div className="flex h-5 items-center pl-[5px]">
          <I w={15} h={14} vb="0 0 16 14"><path d="M3 1h12l-3 3H0zM3 5.500h12l-3 3H0zM3 10h12l-3 3H0z" fill="url(#b2)" stroke="#0b5e95" strokeWidth=".7" /></I>
          <Fit w={30} className="ml-[3px]">Layers</Fit><div className={tabGap} />
          <I w={16} h={16} vb="0 0 16 16"><path d="M8 .5L1 12l6 3.500L15 12zM8 .5l-1 15M8 .5L5 10l10 2M1 12l4-2" stroke="#0b5e95" strokeWidth="1.100" fill="#e6f4fb" /></I>
          <Fit w={45} className="ml-[2px]">Geometry</Fit><div className={tabGap} />
          <I w={16} h={14}><path d="M0 21c10 2 11-1 11-8S13 3 24 4" stroke="#0b74b3" strokeWidth="4" /></I>
          <Fit w={41} className="ml-[3px]">Toolpath</Fit>
        </div>
        <div className="-mt-px ml-[6px] flex h-[21px] w-20 items-center rounded-b-[3px] border border-t-0 border-[#a0a0a0] bg-white pl-[3px] pt-px text-black">
          <I w={16} h={16} vb="0 0 16 16"><circle cx="5.500" cy="5" r="3.300" stroke="#0b6aa5" strokeWidth="2.300" /><circle cx="5.500" cy="5" r="4.800" stroke="#0b6aa5" strokeWidth="1.600" strokeDasharray="1.700 1.500" /><circle cx="11.500" cy="11" r="2.500" stroke="#0b6aa5" strokeWidth="2.200" /><circle cx="11.500" cy="11" r="4" stroke="#0b6aa5" strokeWidth="1.400" strokeDasharray="1.500 1.300" /></I>
          <Fit w={51} className="ml-[3px]">Processing</Fit>
        </div>
      </div>
      <div className="mt-[6px]"><PanelHead t="Camera" w={36} /></div>
      <div className="h-[275px] w-[366px] border border-[#00ff00] bg-[repeating-linear-gradient(90deg,#171717_0px,#171717_6px,#141414_7px,#141414_9px)]">
        <div className="h-full w-4 bg-gradient-to-r from-[#2c2c2c] to-transparent" />
      </div>
      <div className="flex h-[22px] items-center border-t border-[#d5d5d5] pl-1"><Fit w={37}>default</Fit></div>
      <div className="flex h-[23px] items-start border-t-2 border-white font-['Liberation_Sans',sans-serif] text-[11px] text-[#737373]">
        <div className="flex h-5 w-16 items-center rounded-b-[3px] border border-t-0 border-[#a0a0a0] bg-white pl-[3px] text-black"><CamIcon s={16} /><Fit w={36} className="ml-[2px]">Camera</Fit></div>
        <div className="flex h-5 flex-1 items-center border-t border-[#a0a0a0] pl-1">
          <I w={16} h={18} vb="0 0 16 18"><path d="M10 9l5 6" stroke="#0b5e95" strokeWidth="2.500" /><circle cx="9" cy="5" r="4.300" fill="url(#lens)" stroke="#9ab" /><path d="M4.500 9v9M0 13.500h9" stroke="#0b5e95" strokeWidth="1.500" /><path d="M4.500 8l2 2.500h-4zM0 13.500L2 12v3z" fill="#0b5e95" /></I>
          <Fit w={50} className="ml-[3px]">Navigation</Fit><div className="mx-[5px] h-[14px] w-px bg-[#a0a0a0]" />
          <I w={14} h={16} vb="0 0 14 16"><path d="M0 0h14v16H0z" fill="url(#b2)" /><path d="M2 2h10M2 5.500h10M2 8.500h10M2 11.500h10M2 14h7" stroke="#fff" strokeWidth="1.100" /></I>
          <Fit w={46} className="ml-[4px]">Properties</Fit>
        </div>
      </div>
    </div>
  );
}

/* ---------- machining view ---------- */
const Mag = ({ area = false }: { area?: boolean }) => <I>{area ? <path d="M16 .5H.5v17H8" stroke="#222" strokeDasharray="4 2.500" /> : <path d="M1 20.500h11M4 18l-3 2.500L4 23M9.500 18l3 2.500-3 2.500" stroke="#111" strokeWidth="1.300" />}<path d="M17 14l5 8" stroke="#0b6aa5" strokeWidth="4" strokeLinecap="round" /><circle cx="14" cy="8" r="7" fill="url(#lens)" stroke="#9aa3ad" strokeWidth="1.600" /></I>;
const HandIcon = ({ lens = false }: { lens?: boolean }) => <I className="translate-x-px"><path d="M6.500 20L1 14C-1 11 1.500 9.500 3.500 11l2 2.500V5c0-2.500 3.500-2.500 3.500 0V2.500c0-2.500 4-2.500 4 0V3c0-2.500 3.800-2.500 3.800 0V5c.5-2.500 3.700-2 4.200 0l1 9c0 6-3 10-8 10-3 0-6-1.500-7.500-4z" fill="url(#b)" /><path d="M9.200 4v7M13 4v7M16.800 5v6" stroke="#064f82" strokeWidth=".8" />{lens && <><path d="M16 15l4 6" stroke="#0b5e95" strokeWidth="2.500" /><circle cx="13.500" cy="12" r="5" fill="url(#lens)" stroke="#9aa3ad" strokeWidth="1.400" /></>}</I>;

function ViewBar() {
  return (
    <>
      <div className="flex h-[21px] shrink-0 items-end border-t border-[#a0a0a0] bg-[#f0f0f0]">
        <div className="flex h-[20px] w-[189px] items-center justify-end rounded-tr-[3px] border border-b-0 border-[#a0a0a0] bg-white pr-[7px] font-['Liberation_Sans',sans-serif] text-[11px] font-bold"><Fit w={86}>Machining view</Fit></div>
        <div className="flex h-full flex-1 items-center justify-end gap-2 border-b border-[#a0a0a0] pr-[6px]">
          <I w={5} h={8} vb="0 0 5 8"><path d="M4.500 .8v6.400L.8 4z" stroke="#000" /></I>
          <I w={5} h={8} vb="0 0 5 8" className="ml-[2px]"><path d="M.5 .8v6.400L4.200 4z" stroke="#000" /></I>
          <I w={9} h={8} vb="0 0 9 8"><path d="M1 0l7 8M8 0L1 8" stroke="#000" strokeWidth="2" /></I>
        </div>
      </div>
      <div className="flex h-[37px] shrink-0 items-center bg-gradient-to-b from-[#fdfdfd] to-[#f0f0f0] pl-[94px]">
        <Cell><I><path d="M0 1h24v22H0z" fill="url(#b2)" /><path d="M20 8h3M20 12h3M20 16h3" stroke="#8fdcf8" /></I></Cell>
        <Cell><I><path d="M1 1h22v22H1z" fill="url(#b)" stroke="#06507f" /><path d="M3 3h11v9H3z" fill="#c8ecfa" /><path d="M5 7h7M5 5h3M9 9h3" stroke="#2b8cc0" /><path d="M0 4V0h4M20 0h4v4M24 20v4h-4M4 24H0v-4" stroke="#222" strokeWidth="1.300" /></I></Cell>
        <Cell><Mag area /></Cell><Cell><Mag /></Cell><Cell><HandIcon /></Cell><Cell><HandIcon lens /></Cell>
        <div className="-ml-[2px] mr-[-2px]"><Cell><I className="-ml-1"><path d="M9 2C2 0 0 5 4 9s5 10-4 9" stroke="#f0a818" strokeWidth="3.500" /><path d="M24 2c-8-2-9 4-6 7s3 11-6 10" stroke="#1286c8" strokeWidth="3.500" /><path d="M6 7l12 9h-5l4 6-3 1.500-4-6-3 4z" fill="#fff" stroke="#111" strokeWidth="1.300" /></I></Cell></div>
        <Caret />
      </div>
    </>
  );
}

const drills: [number, number, boolean][] = [[242, 116, true], [586, 116, true], [138, 355, true], [690, 355, true], [242, 593, false], [586, 593, false]];
const vias: [number, number][] = [
  [345, 180], [345, 225], [501, 180], [501, 225], [480, 204], [345, 330], [432, 330], [354, 349], [438, 381], [351, 390], [399, 390], [375, 414], [351, 438], [399, 438],
  [303, 462], [327, 463], [354, 498], [480, 464], [480, 489], [567, 480], [516, 528], [531, 528], [408, 528], [348, 528], [308, 386], [261, 392], [239, 433],
];
const tiny: [number, number][] = [[303, 347], [393, 349], [434, 331], [238, 436], [481, 463], [400, 439], [343, 178], [346, 527]];
const pads = [470, 489, 509, 528, 548];

function Board() {
  return (
    <svg viewBox="546 183 1374 686" className="h-[686px] w-[1374px] bg-[#808080]" fill="none" shapeRendering="crispEdges">
      <path d="M546 438.500H1832" stroke="#f00" /><path d="M1832.500 183v686" stroke="#008a00" /><path d="M1767.500 183v686" stroke="#c0c0c0" />
      <g transform="translate(840 320) scale(.33333)" stroke="#ff4500" strokeWidth="3">
        <path d="M70.500 46.500h690v615h-690z" stroke="#000" />
        <path d="M219 82.500h390L723 355 646 538.500H183L107 355z" />
        <path d="M424 100.500h-64c-20 0-36 16-36 36M430 100.500h62c20 0 36 16 36 36M324 267c0 22 16 37 36 37h64M430 304h60c22 0 38-15 38-37" />
        <path d="M324 136v61M324 207v60M528 136v61M528 207v60" strokeWidth="6" />
        <path d="M263 234h-23v-63h63v63h-26" strokeWidth="6" /><path d="M569 234h-23M545.500 234v-63M608 171v63" /><path d="M545 171h63M608 234h-24" strokeWidth="6" />
        <path d="M263 234v61l57 58v112l7 6 8-6V358" /><path d="M278 234v56l52 50" strokeWidth="5" /><path d="M330 340.500h144L569 244v-10" />
        <path d="M335 355.500h146" strokeWidth="4" /><path d="M584 234v18L490 345" strokeWidth="4" /><path d="M490 344h40l30 33v12M482 352h46l32 34" strokeWidth="4" /><path d="M538 355l31 30v33l-12 12h-96v-40h99v28" />
        <path d="M458 389h102" strokeWidth="5" /><path d="M459 389v28M460 409h99M479 390v40M499 390v40M518 390v40M538 390v40" />
        {drills.map(([x, y, ring]) => (
          <g key={x + "-" + y}><circle cx={x} cy={y} r="15" fill="#00a800" stroke="none" />{ring && <circle cx={x} cy={y} r="19" />}<path d={`M${x - 3} ${y}h6`} strokeWidth="5" /></g>
        ))}
        {vias.map(([x, y]) => <path key={x + "-" + y} d={`M${x - 3} ${y}h6`} strokeWidth="6" />)}
        {tiny.map(([x, y]) => <path key={x + "-" + y} d={`M${x - 2} ${y}h4`} stroke="#00a800" />)}
        {pads.map((x) => <g key={x}>{[400, 420].map((y) => <g key={y}><path d={`M${x - 6} ${y}h12`} strokeWidth="12" stroke="#00a800" /><path d={`M${x - 3} ${y}h6`} strokeWidth="6" /></g>)}</g>)}
        {[271, 576].map((x) => <g key={x}><path d={`M${x - 4} 202h9`} strokeWidth="9" stroke="#00a800" /><path d={`M${x - 3} 204h5`} strokeWidth="5" /></g>)}
        <path d="M462 528h3M544 528h2M279 502h5" />
      </g>
    </svg>
  );
}

/* ---------- fault monitor ---------- */
const cols: { a: string; aw: number; b?: string; bw?: number; w: string; v: string; vw: number }[] = [
  { a: "Client", aw: 25, b: "ID", bw: 11, w: "w-[67px]", v: "0", vw: 6 },
  { a: "Client", aw: 25, b: "Description", bw: 52, w: "w-[105px]", v: "Protomat", vw: 41 },
  { a: "Unit", aw: 17, b: "ID", bw: 11, w: "w-[51px]", v: "1", vw: 6 },
  { a: "Unit", aw: 17, b: "Description", bw: 52, w: "w-[98px]", v: "MoveXY", vw: 40 },
  { a: "Fault", aw: 22, b: "ID", bw: 11, w: "w-[64px]", v: "0", vw: 6 },
  { a: "Fault Time", aw: 48, w: "w-[151px]", v: "11/20/2019 10:32:03 AM,968", vw: 142 },
  { a: "Fault", aw: 22, b: "Code", bw: 25, w: "w-[77px]", v: "4110", vw: 24 },
  { a: "Fault Description", aw: 78, w: "w-[177px]", v: "FUNCTION_ABORTED_BY_USER", vw: 169 },
];
const DarkTri = ({ flip = false, bar = false }: { flip?: boolean; bar?: boolean }) => (
  <I className={flip ? "-scale-x-100" : ""}>
    {bar ? <><path d="M1 1.500h4.500v21H1zM9.500 1.500L23 12 9.500 22.500z" fill="url(#k)" stroke="#222" /></> : <path d="M1 1.500L21 12 1 22.500z" fill="url(#k)" stroke="#222" />}
  </I>
);
const Check = ({ small = false }: { small?: boolean }) => <I>{small ? <><path d="M.5 17.500V.5h16v9M.5 17.500H8" stroke="#222" strokeDasharray="4 2.500" /><path d="M12 16l4 5 6-10" stroke="#009048" strokeWidth="4" strokeLinecap="round" /></> : <path d="M3 9l6.500 10L21 3" stroke="#009048" strokeWidth="5.500" strokeLinecap="round" strokeLinejoin="round" />}</I>;

function FaultMonitor() {
  return (
    <div className="flex h-[260px] flex-col font-['Liberation_Sans',sans-serif] text-[11px]">
      <PanelHead t="Fault monitor" w={60} />
      <div className="flex h-9 shrink-0 items-center bg-gradient-to-b from-[#fdfdfd] to-[#f0f0f0] pl-[2px]">
        <Grip tall={26} />
        <div className="ml-[4px] flex">
          <Cell><DarkTri flip bar /></Cell><Cell><DarkTri flip /></Cell><Cell><DarkTri /></Cell><Cell><DarkTri bar /></Cell>
          <Cell><Check small /></Cell><Cell><Check /></Cell>
          <Cell><I><path d="M.5 17.500V.5h16v9M.5 17.500H8" stroke="#999" strokeDasharray="4 2.500" /><path d="M13 12l8 9M21 12l-8 9" stroke="#bbb" strokeWidth="3.500" strokeLinecap="round" /></I></Cell>
          <Cell><XIcon /></Cell>
        </div>
      </div>
      <div className="flex-1 border border-black bg-white">
        <div className="flex h-[33px] border-b border-t border-b-[#a0a0a0] border-t-[#a0a0a0] pt-px">
          <div className="w-[22px] border-r border-[#e0e0e0]" />
          {cols.map((c, i) => (
            <div key={i} className={"flex shrink-0 flex-col justify-center border-r border-[#e0e0e0] pl-[7px] pt-[2px] leading-[13px] " + c.w}>
              <Fit w={c.aw}>{c.a}</Fit>{c.b && <Fit w={c.bw!}>{c.b}</Fit>}
            </div>
          ))}
          <div className="flex items-center pl-[7px] pt-[2px]"><Fit w={55}>Accept time</Fit></div>
        </div>
        <div className="flex h-5 border-b border-[#a0a0a0] bg-[#0078d7] text-white">
          <div className="flex w-[22px] items-center justify-center border-r border-[#8a9aa8]"><I w={16} h={15} vb="0 0 16 15"><path d="M8 .5l7.500 14H.5z" fill="#ffa914" stroke="#c97c00" /><path d="M8 4.500v5.500M8 11.500V13" stroke="#111" strokeWidth="2" /></I></div>
          {cols.map((c, i) => (
            <div key={i} className={"flex shrink-0 items-center border-r border-[#8a9aa8] pl-[3px] pt-[2px] " + c.w}><Fit w={c.vw}>{c.v}</Fit></div>
          ))}
        </div>
      </div>
    </div>
  );
}

/* ---------- bottom bars ---------- */
const StatusBar = () => (
  <div className="flex h-[26px] shrink-0 items-center border-b border-t border-b-[#b5b5b5] border-t-[#d5d5d5] bg-[#f0f0f0] pl-1 pt-[2px]">
    <Fit w={32}>Ready</Fit>
    <div className="ml-auto flex pr-[18px]">
      <Fit w={54} className="mr-[11px]">Cursor X =</Fit><Fit w={58} className="mr-[12px]">122.42 mm</Fit>
      <Fit w={17} className="mr-[10px]">Y =</Fit><Fit w={64} className="mr-[27px]">164.951 mm</Fit>
      <Fit w={59} className="mr-[10px]">Anchor X =</Fit><Fit w={58} className="mr-[13px]">12.192 mm</Fit>
      <Fit w={17} className="mr-[10px]">Y =</Fit><Fit w={58} className="mr-[19px]">27.686 mm</Fit>
      <Fit w={43}>Drill #32</Fit>
    </div>
  </div>
);

const TaskApp = ({ children, on = false }: Kids & { on?: boolean }) => (
  <div className={"flex h-10 w-12 shrink-0 flex-col items-center justify-between pt-2 " + (on ? "bg-[#3a3f45]" : "")}>
    {children}<div className={"h-[3px] bg-[#76b9ed] " + (on ? "w-12" : "w-10")} />
  </div>
);

const Taskbar = () => (
  <div className="flex h-10 shrink-0 items-center bg-[#050a12] text-white">
    <div className="flex w-12 justify-center"><I w={16} h={16} vb="0 0 16 16"><path d="M0 2.300l6.500-.9v6.200H0zM7.300 1.300L16 0v7.600H7.300zM0 8.400h6.500v6.200L0 13.700zM7.300 8.400H16V16l-8.700-1.300z" fill="#fff" /></I></div>
    <div className="flex h-10 w-[344px] items-center border-t border-[#c8c8c8] bg-[#f2f2f2] text-[#3a3a3a]">
      <I w={22} h={22} className="ml-[9px]"><circle cx="12" cy="12" r="10" stroke="#111" strokeWidth="3.200" /></I>
      <Fit w={128} className="ml-[9px] text-[14.500px]">Type here to search</Fit>
      <I w={12} h={18} vb="0 0 12 18" className="ml-[149px]"><rect x="3.500" y=".6" width="5" height="10.500" rx="2.500" stroke="#222" strokeWidth="1.200" /><path d="M1 8.500c0 6.500 10 6.500 10 0M6 13.500V17M3.500 17.200h5" stroke="#222" strokeWidth="1.200" /></I>
    </div>
    <div className="flex w-12 justify-center"><I w={17} h={17} vb="0 0 17 17"><path d="M.5 4V.5h11V4M.5 13v3.500h11V13M.5 5.500h11v6H.5zM15.500 0v3M15.500 8v9" stroke="#eee" strokeWidth="1.200" /><path d="M14 4h3v3h-3z" fill="#eee" /></I></div>
    <div className="flex gap-px pl-[3px]">
      <TaskApp><I w={22} h={22} className="mt-[1px]"><circle cx="12" cy="12" r="12" fill="#fbc116" /><path d="M12 12L1.600 6A12 12 0 0 1 22.400 6z" fill="#e33b2e" /><path d="M12 12L1.600 6A12 12 0 0 0 12 24l5-9z" fill="#2da94f" /><path d="M12 6.500h10.700A12 12 0 0 0 1.600 6l5.600 8.500z" fill="#e33b2e" /><circle cx="12" cy="12" r="5.500" fill="#fff" /><circle cx="12" cy="12" r="4.400" fill="#4286f4" /></I></TaskApp>
      <TaskApp><I><path d="M.5 .5h23v19H.5z" fill="#3a3f44" stroke="#c8ccd0" /><path d="M3 4l3 2-3 2M7 9h3" stroke="#fff" /><path d="M6 14l5-4 4 4-4 5z" fill="#f0433a" /><path d="M13 9l4 2 4-4 3 6-5 4-5-3z" fill="#3d78e0" /><path d="M12 19l5-4 6 2-6 7z" fill="#c6e02a" /></I></TaskApp>
      <TaskApp on><AppIcon s={24} /></TaskApp>
      <TaskApp><I><path d="M1 3h8l2 2h12v18H1z" fill="#f7d774" /><path d="M1 7h22v16H1z" fill="#ffe596" /><path d="M5 23V13h14v10h-4v-5H9v5z" fill="#3ba3dd" /></I></TaskApp>
    </div>
    <div className="ml-auto flex items-center pr-[4px]">
      <I w={16} h={16} vb="0 0 16 16"><circle cx="11" cy="3" r="2.400" stroke="#eee" strokeWidth="1.200" /><path d="M7.500 8c1-3 6-3 7 2" stroke="#eee" strokeWidth="1.200" /><circle cx="5" cy="8.500" r="2.600" stroke="#eee" strokeWidth="1.200" /><path d="M1 16c0-6 8-6 8 0" stroke="#eee" strokeWidth="1.200" /></I>
      <I w={12} h={7} vb="0 0 12 7" className="ml-[22px]"><path d="M.5 6.500L6 1l5.500 5.500" stroke="#eee" strokeWidth="1.300" /></I>
      <I w={16} h={14} vb="0 0 16 14" className="ml-[10px]"><path d="M5 1.500h10.500v8H4V6M.5 .5h4v3h-4zM2.500 3.500v9M10 9.500v3M7 13h6" stroke="#eee" strokeWidth="1.200" /></I>
      <I w={15} h={13} vb="0 0 15 13" className="ml-[8px]"><path d="M.5 4h2.500L6 1v11L3 9H.5zM9 4l5 5M14 4L9 9" stroke="#eee" strokeWidth="1.200" /></I>
      <div className="ml-[6px] flex w-[60px] flex-col items-center text-[12px] leading-[18px]"><Fit w={48}>10:53 AM</Fit><Fit w={58}>11/20/2019</Fit></div>
      <I w={16} h={16} vb="0 0 16 16" className="ml-[15px]"><path d="M.6 .6h14.800v11.800H10.500L8 15l-2.500-2.600H.6z" stroke="#eee" strokeWidth="1.300" /></I>
      <div className="ml-[20px] h-10 w-px bg-[#5a5f66]" />
    </div>
  </div>
);

export default function App() {
  return (
    <div className="relative flex h-[1200px] w-[1920px] flex-col overflow-hidden bg-[#f0f0f0] font-['Open_Sans',sans-serif] text-[11.500px] leading-4 text-black">
      <Defs />
      <TitleBar />
      <div className="flex h-[23px] items-center bg-gradient-to-r from-[#f0f0f0] to-[#f8f8f8] to-70%">
        {menus.map(([t, gap, w]) => (
          <div key={t} className="flex" style={{ paddingLeft: gap }}><Fit w={w}>{t}</Fit></div>
        ))}
      </div>
      <Toolbars />
      <div className="flex h-[1009px] shrink-0">
        <Side />
        <LeftDock />
        <div className="ml-1 flex w-[1374px] flex-col">
          <ViewBar />
          <Board />
          <div className="h-[5px] border-t border-[#a0a0a0] bg-[#f6f6f6]" />
          <FaultMonitor />
        </div>
      </div>
      <StatusBar />
      <Taskbar />
      <MachiningMenu />
    </div>
  );
}
